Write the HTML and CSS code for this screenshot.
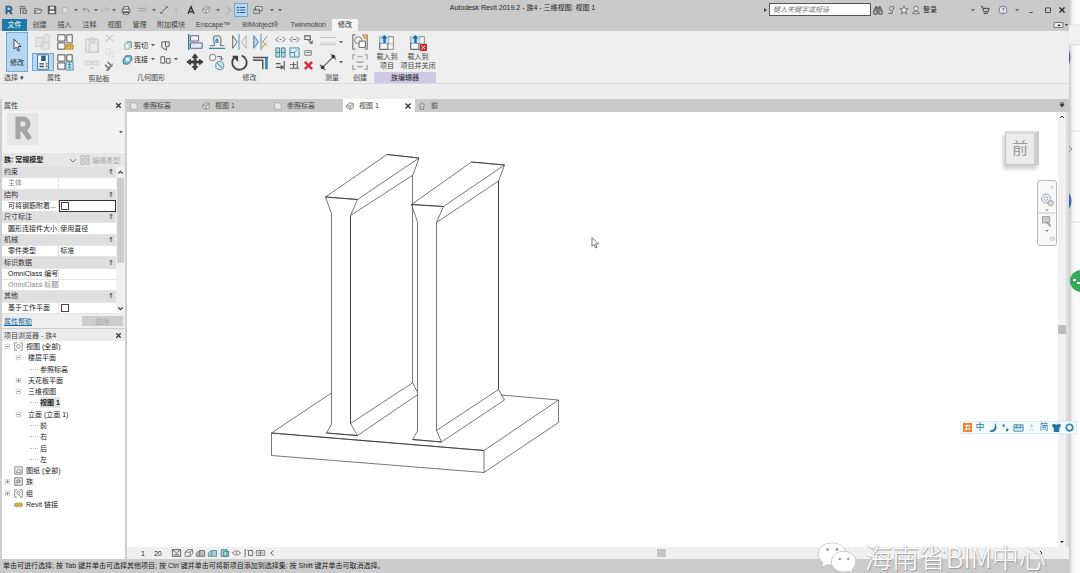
FILE: index.html
```html
<!DOCTYPE html>
<html lang="zh-CN">
<head>
<meta charset="utf-8">
<title>Autodesk Revit 2019.2 - 族4 - 三维视图: 视图 1</title>
<link rel="stylesheet" href="styles.css">
</head>
<body>
<svg class="defs" aria-hidden="true">
  <symbol id="caret" viewBox="0 0 8 8"><path d="M2 3h4L4 5.500z" fill="#666"/></symbol>
  <symbol id="close" viewBox="0 0 8 8"><path d="M2 2l4 4M6 2L2 6" stroke="#333" stroke-width="1.100"/></symbol>
  <symbol id="house" viewBox="0 0 12 12"><path d="M2 5l4-3 4 1v5l-4 2-4-2zM2 5l4 1 4-3M6 6v4" fill="#ddd" stroke="#777" stroke-width=".8"/></symbol>
  <symbol id="sheet" viewBox="0 0 12 12"><path d="M2 2h5l3 3v5H2z" fill="#e8e8e8" stroke="#aaa"/></symbol>
  <symbol id="minus" viewBox="0 0 8 8"><path d="M1.500 1.500h5v5h-5z" fill="#fff" stroke="#bbb" stroke-width=".8"/><path d="M2.500 4h3" stroke="#777"/></symbol>
  <symbol id="plus" viewBox="0 0 8 8"><path d="M1.500 1.500h5v5h-5z" fill="#fff" stroke="#bbb" stroke-width=".8"/><path d="M2.500 4h3M4 2.500v3" stroke="#777"/></symbol>
  <symbol id="load" viewBox="0 0 20 20"><path d="M2 3h15v14H2z" fill="#fff" stroke="#777"/><path d="M12 3v8h5" fill="none" stroke="#999"/><path d="M2 10h9v7H2z" fill="#f4f7fa" stroke="#456"/><path d="M3 1h8v9H3z" fill="#c5e3f5"/><path d="M7 1L3.500 5H6v5h2.500V5h2z" fill="#126aa8"/></symbol>
</svg>

<div class="app">
  <div class="window">
    <header class="titlebar">
      <nav class="qat" aria-label="快速访问工具栏">
        <button class="w14" aria-label="Revit"><svg viewBox="0 0 12 12"><path d="M3 11V2h3.500a2.300 2.300 0 0 1 0 5H3M6 7l3.500 4" fill="none" stroke="#246090" stroke-width="2.200"/></svg></button>
        <button class="w14" aria-label="主页"><svg viewBox="0 0 12 12"><path d="M2 4h8M2 2h7M3 4v7M6 6h4v4H6z" fill="none" stroke="#555"/></svg></button>
        <button class="w16" aria-label="打开"><svg viewBox="0 0 12 12"><path d="M2 10V4h3l1 1h3v1M2 10l2-4h7l-2 4z" fill="#ddd" stroke="#555" stroke-width=".9"/></svg></button>
        <button class="w12" aria-label="保存"><svg viewBox="0 0 12 12"><path d="M1.500 1.500h9v9h-9z" fill="#555" stroke="#444"/><path d="M3.500 2h5v3h-5zM3 7h6v3H3z" fill="#eee"/></svg></button>
        <button class="w14" aria-label="同步"><svg viewBox="0 0 12 12"><path d="M3 3h5l2 3-3 4H3z" fill="#ddd" stroke="#aaa"/></svg></button>
        <button class="w8" aria-label="同步选项"><svg><use href="#caret"/></svg></button>
        <button class="w12" aria-label="放弃"><svg viewBox="0 0 12 12"><path d="M5 3L2 5l3 3M2 5h6q3 1 1 4" fill="none" stroke="#888"/></svg></button>
        <button class="w8" aria-label="放弃列表"><svg><use href="#caret"/></svg></button>
        <button class="w10" aria-label="重做"><svg viewBox="0 0 12 12"><path d="M7 3l3 2-3 3M10 5H4q-3 1-1 4" fill="none" stroke="#b0b0b0"/></svg></button>
        <button class="w8" aria-label="重做列表"><svg><use href="#caret"/></svg></button>
        <button class="w16" aria-label="打印"><svg viewBox="0 0 12 12"><path d="M3 5V2h6v3M1.500 5h9v4h-9zM3 8h6v3H3z" fill="#eee" stroke="#444"/></svg></button>
        <button class="w16" aria-label="测量"><svg viewBox="0 0 12 12"><path d="M1 4h10M1 7h10" stroke="#999"/><path d="M1 9h10" stroke="#ccc"/></svg></button>
        <button class="w8" aria-label="测量选项"><svg><use href="#caret"/></svg></button>
        <button class="w12" aria-label="对齐尺寸标注"><svg viewBox="0 0 12 12"><path d="M2 10l8-8M1 8l3 3M8 1l3 3" stroke="#555"/></svg></button>
        <button class="w14" aria-label="标记"><svg viewBox="0 0 12 12"><path d="M5 4v1M5 8v1" stroke="#777"/></svg></button>
        <button class="w14" aria-label="文字"><svg viewBox="0 0 12 12"><path d="M2.500 10.500L6 2l3.500 8.500M4 8h4" fill="none" stroke="#333" stroke-width="1.700"/></svg></button>
        <button class="w16" aria-label="默认三维视图"><svg><use href="#house"/></svg></button>
        <button class="w8" aria-label="三维选项"><svg><use href="#caret"/></svg></button>
        <button class="w12" aria-label="剖面"><svg viewBox="0 0 12 12"><path d="M4 2l5 4-5 5" fill="none" stroke="#999"/></svg></button>
        <button class="w14 lit" aria-label="细线"><svg viewBox="0 0 12 12"><path d="M1 3h3M5 3h6M1 6h3M5 6h6M1 9h3M5 9h6" stroke="#235a90" stroke-width="1.300"/></svg></button>
        <button class="w20" aria-label="切换窗口"><svg viewBox="0 0 12 12"><path d="M3 2h8v5H3zM1 5h7v5H1z" fill="#ececec" stroke="#555"/></svg></button>
        <button class="w8" aria-label="窗口列表"><svg><use href="#caret"/></svg></button>
        <button class="w8" aria-label="自定义"><svg><use href="#caret"/></svg></button>
      </nav>
      <h1>Autodesk Revit 2019.2 - 族4 - 三维视图: 视图 1</h1>
      <div class="info">
        <svg class="i8" viewBox="0 0 8 8"><path d="M3 2l3 2-3 2z" fill="#444"/></svg>
        <input class="search" type="text" aria-label="搜索" placeholder="键入关键字或短语">
        <button class="w14" aria-label="查找"><svg viewBox="0 0 12 12"><path d="M3 2h2v3h2V2h2l2 5v4H7V8H5v3H1V7z" fill="#888" stroke="#333" stroke-width=".8"/><path d="M2 8h2v2H2zM8 8h2v2H8z" fill="#ddd"/></svg></button>
        <button class="w12" aria-label="通讯中心"><svg viewBox="0 0 12 12"><path d="M9 2q-5-1-5 2t4 3q-1 4-5 3M9 2v4M3 10h5" fill="none" stroke="#666"/></svg></button>
        <button class="w14" aria-label="收藏夹"><svg viewBox="0 0 12 12"><path d="M6 1l1.500 3.500 3.500.2-2.800 2.300 1 3.700L6 8.600l-3.200 2.100 1-3.700L1 4.700l3.500-.2z" fill="#e4e4e4" stroke="#555" stroke-width=".9"/></svg></button>
        <button class="signin"><svg viewBox="0 0 12 12"><circle cx="6" cy="4" r="2.600" fill="#eee" stroke="#666"/><path d="M2 10.500q0-3 4-3t4 3z" fill="#ddd" stroke="#666"/></svg>登录</button>
        <button class="w8" aria-label="帐户"><svg><use href="#caret"/></svg></button>
        <button class="w16" aria-label="应用商店"><svg viewBox="0 0 12 12"><path d="M1 2h2l1.500 6H10l1-4H4M4.500 10h5" fill="none" stroke="#444" stroke-width="1.200"/></svg></button>
        <button class="w20" aria-label="帮助"><svg viewBox="0 0 12 12"><circle cx="6" cy="6" r="4.700" fill="#eef" stroke="#667"/><path d="M4.500 4.500q1.500-2 3 0Q7.500 5.500 6 6.500v1M6 8.500v1" fill="none" stroke="#448"/></svg></button>
        <button class="w8" aria-label="帮助列表"><svg><use href="#caret"/></svg></button>
        <button class="w20" aria-label="最小化"><svg viewBox="0 0 12 12"><path d="M4 9h4" stroke="#333"/></svg></button>
        <button class="w14" aria-label="还原"><svg viewBox="0 0 12 12"><path d="M3 3.500h6v5.500H3z" fill="none" stroke="#333"/></svg></button>
        <button class="w14" aria-label="关闭"><svg viewBox="0 0 12 12"><path d="M3 3l6 6M9 3L3 9" stroke="#222" stroke-width="1.500"/></svg></button>
      </div>
    </header>

    <nav class="tabs" aria-label="功能区">
      <a class="file" href="#file">文件</a><a href="#create">创建</a><a href="#insert">插入</a><a href="#annotate">注释</a><a href="#view">视图</a><a href="#manage">管理</a><a href="#addins">附加模块</a><a href="#enscape">Enscape™</a><a href="#bimobject">BIMobject®</a><a href="#twinmotion">Twinmotion</a><a class="current" href="#modify">修改</a>
      <button class="collapse" aria-label="折叠功能区"><svg viewBox="0 0 16 8"><path d="M1 1.500h9v5H1z" fill="#eee" stroke="#777"/><path d="M4 5l2-2 2 2zM12 3h3l-1.500 2z" fill="#333"/></svg></button>
    </nav>

    <section class="ribbon" aria-label="修改">
      <div class="group">
        <div class="tools"><button class="select"><svg viewBox="0 0 12 16"><path d="M3 2v10l2.500-2 1.500 4 1.500-.6L7 9.500h3z" fill="#fff" stroke="#445"/></svg>修改</button></div>
        <div class="caption">选择 ▾</div>
      </div>
      <div class="group">
        <div class="tools pair">
          <button aria-label="粘贴类型属性"><svg viewBox="0 0 20 20"><path d="M2 5h8v10H2zM11 2h6v8h-6zM8 11h9v7H8z" fill="#e4e4e4" stroke="#ccc"/></svg></button>
          <button aria-label="族类别和族参数"><svg viewBox="0 0 20 20"><path d="M2 2h8v7H2zM12 2h6v9h-6zM2 11h8v7H2z" fill="#fafafa" stroke="#444"/><path d="M11 13h8v5h-8z" fill="#e8ba48" stroke="#b98b1c"/><path d="M13 14v2M16 14v2" stroke="#876"/></svg></button>
          <button class="lit" aria-label="属性"><svg viewBox="0 0 20 20"><path d="M4 2h12v16H4z" fill="#fff" stroke="#35618c"/><path d="M8 3h5v6H8z" fill="#235b93"/><path d="M6 12h5M6 15h5M13 12h2M13 15h2" stroke="#345" stroke-width="1.400"/></svg></button>
          <button aria-label="族类型"><svg viewBox="0 0 20 20"><path d="M2 2h8v7H2zM12 2h6v7h-6zM2 11h8v7H2z" fill="#fafafa" stroke="#444"/><path d="M11 10h8v9h-8zM13 13h4M13 16h4M15 11v7" fill="#cde7f2" stroke="#3e89aa"/></svg></button>
        </div>
        <div class="caption">属性</div>
      </div>
      <div class="group clip">
        <div class="tools">
          <div class="stack"><button class="big" aria-label="粘贴"><svg viewBox="0 0 20 20"><path d="M3 4h14v14H3zM7 2h6v4H7zM7 8h10v10H7z" fill="#e9e9e9" stroke="#c4c4c4"/></svg></button><button class="wide" aria-label="连接端切割"><svg viewBox="0 0 20 12"><path d="M3 3h6v4H3zM11 3h6v4h-6z" fill="#e8e8e8" stroke="#ccc"/><path d="M8 10h4l-2 2z" fill="#bbb"/></svg></button></div>
          <div class="stack small"><button aria-label="剪切"><svg viewBox="0 0 12 12"><path d="M2 2l8 7M10 2L2 9" stroke="#ccc" stroke-width="1.500"/></svg></button><button aria-label="复制"><svg viewBox="0 0 12 12"><path d="M2 2h5v6H2zM5 5h5v6H5z" fill="#eee" stroke="#ddd"/></svg></button><button aria-label="匹配类型"><svg viewBox="0 0 12 12"><path d="M1 4l5 5M4 1l5 5" stroke="#666" stroke-width="1.500"/><path d="M11 2L5 11H2l2-4z" fill="#886"/></svg></button></div>
        </div>
        <div class="caption">剪贴板</div>
      </div>
      <div class="group geo">
        <div class="tools rows">
          <div class="line"><button><svg viewBox="0 0 12 12"><path d="M3 4h5v6H3z" fill="#eee" stroke="#8a9"/><path d="M5 2h5v7" fill="#c9e5dc" stroke="#397d67"/></svg>剪切<svg class="i8"><use href="#caret"/></svg></button><button aria-label="拆分面"><svg viewBox="0 0 12 12"><path d="M2 2h8v5H7v4L2 8z" fill="#eee" stroke="#555"/><path d="M6 2v5" stroke="#555"/></svg></button></div>
          <div class="line"><button><svg viewBox="0 0 12 12"><path d="M4 2h6l1 4-4 5H2L1 7z" fill="#77b3d3" stroke="#2c7299"/><path d="M4 4h4v4H4z" fill="#e8f4fa"/></svg>连接<svg class="i8"><use href="#caret"/></svg></button><button aria-label="填色"><svg viewBox="0 0 12 12"><path d="M1 3h4v7H1zM7 5h4v5H7z" fill="#eee" stroke="#555"/></svg><svg class="i8"><use href="#caret"/></svg></button></div>
        </div>
        <div class="caption">几何图形</div>
      </div>
      <div class="group">
        <div class="tools modify">
          <div class="quad">
            <button aria-label="对齐"><svg viewBox="0 0 20 20"><path d="M3 1v18" stroke="#27739b" stroke-width="1.500"/><path d="M5 3h9v6H5z" fill="#eef" stroke="#557"/><path d="M5 11h13v6H5z" fill="#dcebf4" stroke="#557"/></svg></button>
            <button aria-label="偏移"><svg viewBox="0 0 20 20"><path d="M2 14h5v-3q-3-8 3-8t4 8v3h4" fill="none" stroke="#888" stroke-width="1.500"/><path d="M1 17h18M9 11v-3q0-3 2 0v3" fill="none" stroke="#4287aa" stroke-width="1.500"/></svg></button>
            <button aria-label="镜像 - 拾取轴"><svg viewBox="0 0 20 20"><path d="M3 3l5 7-5 7z" fill="#eee" stroke="#555"/><path d="M10 1v18" stroke="#398ab0"/><path d="M18 3l-5 7 5 7z" fill="#eee" stroke="#aaa"/></svg></button>
            <button aria-label="镜像 - 绘制轴"><svg viewBox="0 0 20 20"><path d="M2 3l5 7-5 7z" fill="#b9dced" stroke="#3c7592"/><path d="M10 1v18" stroke="#398ab0"/><path d="M17 3l-5 7 5 4" fill="#eee" stroke="#888"/><path d="M18 8l-5 8-2 1 1-3z" fill="#e5bd42"/></svg></button>
            <button aria-label="移动"><svg viewBox="0 0 20 20"><path d="M10 1l3 4h-2v4h4V7l4 3-4 3v-2h-4v4h2l-3 4-3-4h2v-4H5v2l-4-3 4-3v2h4V5H7z" fill="#444" stroke="#333"/></svg></button>
            <button aria-label="复制图元"><svg viewBox="0 0 20 20"><circle cx="5" cy="5" r="3.500" fill="#fff" stroke="#666"/><circle cx="13" cy="14" r="4.500" fill="#cfe6f1" stroke="#4389ab"/><path d="M10 11l6 6M10 4h5v3M13 6l2 2 2-2" fill="none" stroke="#557"/></svg></button>
            <button aria-label="旋转"><svg viewBox="0 0 20 20"><path d="M6 4a8 8 0 1 0 7-1" fill="none" stroke="#444" stroke-width="2"/><path d="M2 3h7v7z" fill="#444"/></svg></button>
            <button aria-label="修剪"><svg viewBox="0 0 20 20"><path d="M1 5h17M1 8h11v10" fill="none" stroke="#555" stroke-width="1.600"/><path d="M16 5v13" stroke="#3384ac" stroke-width="3"/></svg></button>
          </div>
          <div class="nine">
            <button aria-label="拆分图元"><svg viewBox="0 0 12 12"><path d="M4 3L1 6l3 3M8 3l3 3-3 3M5 6h2" fill="none" stroke="#666"/></svg></button>
            <button aria-label="用间隙拆分"><svg viewBox="0 0 12 12"><path d="M4 3L1 6l3 3M8 3l3 3-3 3M4 6h4" fill="none" stroke="#666"/></svg></button>
            <button aria-label="解锁"><svg viewBox="0 0 12 12"><path d="M2 2h6v4H2zM5 6l5 4M7 10h3V7" fill="none" stroke="#666" stroke-width="1.200"/></svg></button>
            <button aria-label="阵列"><svg viewBox="0 0 12 12"><path d="M1 1h4v10H1zM7 1h4v10H7zM1 6h4M7 6h4" fill="#b9d9e5" stroke="#357f98"/></svg></button>
            <button aria-label="缩放"><svg viewBox="0 0 12 12"><path d="M1 1h10v10H1zM1 6h5v5M6 6l3-3" fill="#d6ebf2" stroke="#46879e"/></svg></button>
            <button aria-label="锁定"><svg viewBox="0 0 12 12"><path d="M2 4h7v5H2zM4 6h4" fill="none" stroke="#777"/></svg></button>
            <button aria-label="修剪单个图元"><svg viewBox="0 0 12 12"><path d="M1 4h5M1 8h7M6 6l3 2-3 2M10 1v10" fill="none" stroke="#555" stroke-width="1.200"/></svg></button>
            <button aria-label="修剪多个图元"><svg viewBox="0 0 12 12"><path d="M1 5h7M1 9h10M5 2v7M9 1v8" fill="none" stroke="#555"/></svg></button>
            <button aria-label="删除"><svg viewBox="0 0 12 12"><path d="M2 2l8 8M10 2l-8 8" stroke="#d12b32" stroke-width="2.600"/></svg></button>
          </div>
        </div>
        <div class="caption">修改</div>
      </div>
      <div class="group measure">
        <div class="tools rows">
          <button><svg viewBox="0 0 20 20"><path d="M1 5h18M1 13h18" stroke="#bbb"/><path d="M1 10h18v2H1z" fill="#ddd"/></svg><svg class="i8"><use href="#caret"/></svg></button>
          <button><svg viewBox="0 0 20 20"><path d="M4 16L16 4M1 13l6 6M13 1l6 6" stroke="#555" stroke-width="1.200"/><circle cx="4" cy="16" r="2" fill="#333"/><circle cx="16" cy="4" r="2" fill="#333"/></svg><svg class="i8"><use href="#caret"/></svg></button>
        </div>
        <div class="caption">测量</div>
      </div>
      <div class="group create">
        <div class="tools rows">
          <button aria-label="创建组"><svg viewBox="0 0 20 20"><path d="M5 2H2v16h3M15 2h3v16h-3" fill="none" stroke="#555"/><circle cx="8" cy="8" r="4" fill="#eee" stroke="#777"/><path d="M9 9h7v7H9z" fill="#fff" stroke="#555"/><path d="M12 1h6v5l-4 1z" fill="#e8a565"/></svg></button>
          <button aria-label="创建类似实例"><svg viewBox="0 0 20 20"><path d="M5 2H2v5M15 2h3v5M5 18H2v-5M15 18h3v-5M7 4h6M7 15h6M6 10h8" fill="none" stroke="#aaa" stroke-width="1.500"/></svg></button>
        </div>
        <div class="caption">创建</div>
      </div>
      <div class="group editor">
        <div class="tools">
          <button class="load"><svg><use href="#load"/></svg>载入到<br>项目</button>
          <button class="load"><svg viewBox="0 0 20 20"><use href="#load" width="20" height="20"/><path d="M12 11h8v8h-8z" fill="#c92d36"/><path d="M14 13l4 4M18 13l-4 4" stroke="#fff"/></svg>载入到<br>项目并关闭</button>
        </div>
        <div class="caption">族编辑器</div>
      </div>
    </section>
    <div class="options"></div>

    <main class="work">
      <aside class="side">
        <section class="properties">
          <header class="panelhead"><h2>属性</h2><button aria-label="关闭属性"><svg><use href="#close"/></svg></button></header>
          <div class="family"><svg class="biglogo" viewBox="0 0 36 36"><path d="M2 2h32v32H2z" fill="#e6e6e6"/><path d="M13 28V8h5a5 5 0 0 1 0 10h-5M18 18l7 10" fill="none" stroke="#a4a4a4" stroke-width="5"/></svg><svg class="i8"><use href="#caret"/></svg></div>
          <div class="typerow"><select aria-label="类型"><option>族: 常规模型</option></select><svg class="i8" viewBox="0 0 8 8"><path d="M1 3l3 3 3-3" fill="none" stroke="#777"/></svg><button disabled><svg viewBox="0 0 12 12"><path d="M1 1h4v4H1zM7 1h4v4H7zM1 7h4v4H1zM7 7h4v4H7z" fill="none" stroke="#aaa"/></svg>编辑类型</button></div>
          <div class="gridwrap">
            <table class="props">
              <tr class="cat"><th colspan="2">约束<span>⇑</span></th></tr>
              <tr class="dim"><td>主体</td><td></td></tr>
              <tr class="cat"><th colspan="2">结构<span>⇑</span></th></tr>
              <tr><td><label for="rebar">可将钢筋附着...</label></td><td class="focus"><input id="rebar" type="checkbox"></td></tr>
              <tr class="cat"><th colspan="2">尺寸标注<span>⇑</span></th></tr>
              <tr><td>圆形连接件大小</td><td>使用直径</td></tr>
              <tr class="cat"><th colspan="2">机械<span>⇑</span></th></tr>
              <tr><td>零件类型</td><td>标准</td></tr>
              <tr class="cat"><th colspan="2">标识数据<span>⇑</span></th></tr>
              <tr><td>OmniClass 编号</td><td></td></tr>
              <tr class="dim"><td>OmniClass 标题</td><td></td></tr>
              <tr class="cat"><th colspan="2">其他<span>⇑</span></th></tr>
              <tr><td><label for="plane">基于工作平面</label></td><td><input id="plane" type="checkbox"></td></tr>
            </table>
            <div class="vscroll"><svg viewBox="0 0 8 8"><path d="M2 5l2-2 2 2" fill="none" stroke="#444" stroke-width="1.200"/></svg><i></i><svg viewBox="0 0 8 8"><path d="M2 3l2 2 2-2" fill="none" stroke="#444" stroke-width="1.200"/></svg></div>
          </div>
          <footer class="apply"><a href="#help">属性帮助</a><button disabled>应用</button></footer>
        </section>
        <section class="browser">
          <header class="panelhead"><h2>项目浏览器 - 族4</h2><button aria-label="关闭项目浏览器"><svg><use href="#close"/></svg></button></header>
          <ul class="tree">
            <li class="l0"><svg><use href="#minus"/></svg><svg class="ic" viewBox="0 0 12 12"><path d="M4 1H1v10h3M8 1h3v10H8" fill="none" stroke="#777"/><circle cx="6" cy="6" r="2.500" fill="none" stroke="#777"/></svg>视图 (全部)</li>
            <li class="l1"><svg><use href="#minus"/></svg>楼层平面</li>
            <li class="l2">参照标高</li>
            <li class="l1"><svg><use href="#plus"/></svg>天花板平面</li>
            <li class="l1"><svg><use href="#minus"/></svg>三维视图</li>
            <li class="l2 active"><b>视图 1</b></li>
            <li class="l1"><svg><use href="#minus"/></svg>立面 (立面 1)</li>
            <li class="l2">前</li>
            <li class="l2">右</li>
            <li class="l2">后</li>
            <li class="l2">左</li>
            <li class="l0 leaf"><svg class="ic" viewBox="0 0 12 12"><path d="M1 1h10v10H1zM3 8l3-4 3 2v3H3z" fill="#eee" stroke="#777"/></svg>图纸 (全部)</li>
            <li class="l0"><svg><use href="#plus"/></svg><svg class="ic" viewBox="0 0 12 12"><path d="M1 1h10v10H1zM4 9V4h4v3H4" fill="#eee" stroke="#555"/></svg>族</li>
            <li class="l0"><svg><use href="#plus"/></svg><svg class="ic" viewBox="0 0 12 12"><path d="M4 1H1v10h3M8 1h3v10H8M5 7l4 3" fill="none" stroke="#666"/><circle cx="6" cy="5" r="2" fill="none" stroke="#666"/></svg>组</li>
            <li class="l0 leaf"><svg class="ic" viewBox="0 0 12 12"><path d="M1 5q2-2 5 0 3-2 5 0v3q-2 2-5 0-3 2-5 0z" fill="#d9b64c" stroke="#9b8642"/></svg>Revit 链接</li>
          </ul>
        </section>
      </aside>

      <section class="docs">
        <nav class="doctabs" aria-label="视图">
          <a href="#v1"><svg><use href="#sheet"/></svg>参照标高</a><a href="#v2"><svg><use href="#house"/></svg>视图 1</a><a href="#v3"><svg><use href="#sheet"/></svg>参照标高</a><a class="current" href="#v4"><svg><use href="#house"/></svg>视图 1<svg class="x"><use href="#close"/></svg></a><a class="last" href="#v5"><svg viewBox="0 0 12 12"><path d="M2 6l4-4 4 4M4 6v4h4V6" fill="none" stroke="#777"/></svg>前</a>
          <svg class="i8 more" viewBox="0 0 8 8"><path d="M2 2h4M2 3.500h4L4 6z" stroke="#444" fill="#444"/></svg>
        </nav>
        <div class="viewport">
          <div class="canvas">
            <svg class="model" viewBox="127 112 931 435" preserveAspectRatio="xMinYMin slice" role="img" aria-label="三维模型">
              <g fill="none" stroke="#555" stroke-width=".8" stroke-linejoin="round">
                <path d="M331.500 393L271.500 433v22.500L484 472.500l74.500-50V400L501 395"/>
                <path d="M271.500 433L484 450.500 558.500 400M484 450.500v22"/>
                <path d="M325.500 197l61.500-42.500 32 3.500-61.500 41.500zM419 158l-6 17-62.500 40.500M357.500 199.500l-7 16"/>
                <path d="M325.500 197l6 16.500V424l-5 9 31 2.500-7-12V215.500M350.500 423.500L413 382.500M357.500 435.500L417 395M412.500 175v207.500l4.500 9"/>
                <path d="M411.500 204.500l60-42.500 33 3-61 41.500zM504.500 165l-6 16-62 41.500M443.500 206.500l-7 16"/>
                <path d="M411.500 204.500l6 17.500v209l-5 8.500 29 2.500-5-11.500v-208M498.500 181v208.500l-62 41M498.500 389.500l6 10.500-63 42"/>
              </g>
              <g fill="none" stroke="#333" stroke-width=".8"><path d="M387 154.500l32 3.500M325.500 197l32 2.500M411.500 204.500l32 2M471.500 162l33 3M271.500 433L484 450.500M326.500 433l31 2.500M412.500 439.500l29 2.500M350.500 215.500v208M498.500 181v208.500"/></g>
              <path d="M592 237.500v9l2-2 1.500 3.500 1.500-.7-1.500-3.300h3z" fill="#fff" stroke="#777"/>
            </svg>
            <div class="cube">前</div>
            <div class="navbar">
              <svg viewBox="0 0 20 66"><path d="M14 3l3 3M17 3l-3 3M1 33h18M14 60h4v3h-4z" fill="none" stroke="#bbb"/><circle cx="9" cy="17" r="5" fill="#e8f1f6" stroke="#8ba8b8"/><circle cx="9" cy="17" r="2" fill="#fff" stroke="#8ba8b8"/><circle cx="14" cy="22" r="3" fill="#ddd" stroke="#999"/><path d="M8 29h4l-2 2zM8 52h4l-2 2z" fill="#888"/><path d="M5 37h8v7H5z" fill="#ccc" stroke="#999"/><path d="M10 43l4 5" stroke="#999" stroke-width="2"/></svg>
            </div>
          </div>
          <div class="viewscroll"><svg viewBox="0 0 8 8"><path d="M2 5l2-2 2 2" fill="none" stroke="#333"/></svg><i></i><svg viewBox="0 0 8 8"><path d="M2 3h4L4 5z" fill="#333"/></svg></div>
        </div>
        <footer class="viewbar">
          <span>1</span><span>20</span>
          <div class="vcicons">
            <svg viewBox="0 0 12 12"><path d="M1 2h10v8H1zM1 2l5 4 5-4M3 8h6" fill="#eee" stroke="#444"/></svg>
            <svg viewBox="0 0 12 12"><path d="M2 5l3-3h6v5L8 10H2zM2 5h6v5M8 5l3-3" fill="#eee" stroke="#666"/></svg>
            <svg viewBox="0 0 12 12"><path d="M1 10V6l4-3h6v7zM5 3v7" fill="#bbb" stroke="#666"/></svg>
            <svg viewBox="0 0 12 12"><path d="M1 10V6l4-3h6v7zM5 3v7" fill="#a6cfd5" stroke="#5b8389"/></svg>
            <svg viewBox="0 0 12 12"><path d="M2 2h7v8H2zM5 4h6v6H5z" fill="#acd8d9" stroke="#3c7d83"/></svg>
            <svg viewBox="0 0 12 12"><path d="M1 6q5-5 10 0-5 5-10 0zM6 5v2" fill="#eee" stroke="#666"/></svg>
            <svg viewBox="0 0 12 12"><path d="M2 1v10M6 3h5v6H6zM4 3h1" fill="none" stroke="#555"/></svg>
            <svg viewBox="0 0 12 12"><path d="M1 3h10v6H1zM3 6h6M6 3v6" fill="#ddd" stroke="#777"/></svg>
            <svg viewBox="0 0 12 12"><path d="M7 3L4 6l3 3" fill="none" stroke="#333"/></svg>
          </div>
          <div class="hscroll"><i></i><svg class="i8" viewBox="0 0 8 8"><path d="M3 2l2 2-2 2" fill="none" stroke="#333"/></svg></div>
        </footer>
      </section>
    </main>
    <footer class="status">单击可进行选择; 按 Tab 键并单击可选择其他项目; 按 Ctrl 键并单击可将新项目添加到选择集; 按 Shift 键并单击可取消选择。</footer>
  </div>

  <div class="backdrop">
    <svg viewBox="0 0 12 300"><path d="M0 25h12v20H0z" fill="#f0f0f0"/><path d="M0 25h12M0 45h12M0 131h12M0 222h12" stroke="#ddd"/><path d="M0 50q3 7 0 15z" fill="#3867b1"/><path d="M0 193q5 8 0 16z" fill="#3867b1"/><path d="M0 146l3 3-3 3" fill="none" stroke="#888"/><circle cx="12" cy="281" r="11" fill="#36a95a"/><path d="M4 280h3M8 283h3" stroke="#fff" stroke-width="2"/></svg>
  </div>
</div>

<div class="ime" aria-label="输入法">
  <svg viewBox="0 0 12 12"><path d="M1 1h10v10H1z" fill="#ec8139"/><path d="M3 4h6M3 8h6M6 3L4 9M8 5v3" stroke="#fff" fill="none"/></svg>
  <b>中</b>
  <svg viewBox="0 0 12 12"><path d="M9 2q1 7-6 8 6 2 7-4z" fill="#36749c" stroke="#36749c"/></svg>
  <svg viewBox="0 0 12 12"><circle cx="4" cy="4" r="1.500" fill="#4c91ad"/><path d="M8 7v2l-1 1" stroke="#36749c" stroke-width="2"/></svg>
  <svg viewBox="0 0 12 12"><path d="M1 3h10v7H1zM1 6h10M4 3v4M8 3v4" fill="#d1e9f0" stroke="#4c8ca8"/></svg>
  <svg viewBox="0 0 12 12"><circle cx="6" cy="4" r="1.500" fill="#ccc"/><path d="M3 10q3-4 6 0" fill="none" stroke="#ccc"/></svg>
  <b>简</b>
  <svg viewBox="0 0 12 12"><path d="M1 3l3-1q2 2 4 0l3 1-1 3H9v5H3V6H2z" fill="#2676a2"/></svg>
  <svg viewBox="0 0 12 12"><circle cx="6" cy="6" r="3.500" fill="#fff" stroke="#3288b6" stroke-width="2"/></svg>
</div>
<div class="watermark">
  <svg viewBox="0 0 44 34"><g fill="#fff" stroke="#bbb" stroke-width=".8"><path d="M17 2C8 2 2 7 2 14q0 5 5 9l-1 5 6-3q4 1 8 0 9-3 12-11C31 6 24 2 17 2z"/><path d="M29 11c-8 0-13 5-13 11s6 11 13 11q3 0 5-1l5 2-1-4q4-3 4-8c0-6-5-11-13-11z"/></g><g fill="#999"><circle cx="12" cy="9" r="1.500"/><circle cx="22" cy="9" r="1.500"/><circle cx="25" cy="19" r="1.300"/><circle cx="34" cy="19" r="1.300"/></g></svg>
  <span>海南省BIM中心</span>
</div>
</body>
</html>
```
FILE: styles.css
```css
* { box-sizing: border-box; }
body {
  margin: 0;
  font: 7px/11px "Liberation Sans", "Noto Sans CJK SC", sans-serif;
  color: #222;
  overflow: hidden;
}
h1, h2 { margin: 0; font-size: 7px; font-weight: 400; white-space: nowrap; }
button, input, select { font: inherit; color: inherit; }
button { padding: 0; border: 0; background: none; display: flex; align-items: center; justify-content: center; white-space: nowrap; }
a { color: inherit; text-decoration: none; white-space: nowrap; }
svg { display: block; flex: none; }
.defs { position: absolute; width: 0; height: 0; }
.i8 { width: 8px; height: 8px; }

.app { display: flex; height: 100vh; }
.window { flex: 1; min-width: 0; display: flex; flex-direction: column; background: #ececec; }
.backdrop { width: 11px; flex: none; background: linear-gradient(90deg, #c8c8c8, #f8f8f8 4px, #fff); }
.backdrop svg { width: 12px; height: 300px; }

/* title bar */
.titlebar { flex: none; height: 19px; display: flex; align-items: center; background: #cacaca; }
.qat { display: flex; align-items: center; padding-left: 2px; flex: 1; }
.titlebar button svg { width: 10px; height: 10px; }
.titlebar .w8 svg { width: 8px; height: 8px; }
.w8 { width: 8px; }
.w10 { width: 10px; }
.w12 { width: 12px; }
.w14 { width: 14px; }
.w16 { width: 16px; }
.w20 { width: 20px; }
.qat .lit { height: 14px; }
.lit { background: #b7d8f2; outline: 1px solid #6fa6d2; outline-offset: -1px; }
.titlebar h1 { line-height: 16px; align-self: flex-start; padding-right: 26px; }
.info { flex: 1; display: flex; align-items: center; justify-content: flex-end; }
.search { width: 102px; height: 13px; padding: 0 3px; border: 1px solid #555; background: #fff; border-radius: 0; }
.search::placeholder { color: #777; font-style: italic; opacity: 1; }
.signin { gap: 2px; margin-right: 32px; }

/* ribbon */
.tabs { flex: none; height: 12px; display: flex; background: #cacaca; padding-left: 2px; line-height: 12px; color: #444; }
.tabs a { padding: 0 5px; flex: none; min-width: 25px; text-align: center; }
.tabs .file { background: #1979a9; color: #fff; }
.tabs a:nth-child(n+8) { padding: 0 6px; }
.tabs .current { background: #f4f4f4; color: #222; }
.collapse { margin-left: auto; }
.collapse svg { width: 16px; height: 8px; }
.ribbon { flex: none; display: flex; background: #eee; height: 53px; padding-left: 2px; border-bottom: 1px solid #d9d9d9; }
.group { display: flex; flex-direction: column; padding: 1px 2px 0; }
.tools { flex: 1; display: flex; align-items: center; }
.caption { text-align: center; line-height: 11px; height: 11px; color: #444; white-space: nowrap; }
.select { width: 22px; height: 40px; margin-left: 2px; flex-direction: column; gap: 4px; background: #b3d8f2; border: 1px solid #7baacd; }
.group:first-child .caption { text-align: left; }
.pair { display: grid; grid-template-columns: 22px 22px; grid-template-rows: 20px 20px; align-content: center; }
.tools button svg { width: 18px; height: 18px; }
.tools .i8, .tools button .i8 { width: 8px; height: 8px; }
.tools .select svg { width: 12px; height: 16px; }
.clip { padding: 1px 5px 0; }
.clip .tools { gap: 3px; justify-content: center; }
.stack { display: flex; flex-direction: column; gap: 4px; }
.stack .wide svg { height: 12px; }
.stack.small { gap: 1px; }
.tools .small svg, .line button svg, .tools .nine svg { width: 11px; height: 11px; }
.small button { height: 13px; }
.rows { flex-direction: column; justify-content: center; gap: 2px; align-items: flex-start; }
.geo { width: 62px; }
.geo .rows { gap: 3px; }
.line { display: flex; gap: 3px; }
.line button { gap: 1px; }
.modify { gap: 1px; }
.quad { display: grid; grid-template-columns: repeat(4, 22px); grid-auto-rows: 20px; }
.nine { display: grid; grid-template-columns: repeat(3, 14px); grid-auto-rows: 13px; }
.create { padding: 1px 0 0 4px; }
.editor { padding: 1px 0 0; margin-left: 5px; }
.editor .caption { background: #cfc9e6; color: #222; }
.load { width: 26px; flex-direction: column; line-height: 9px; color: #444; }
.editor .load + .load { width: 36px; }
.options { flex: none; height: 15px; background: #ededed; }

/* panels */
.work { flex: 1; min-height: 0; display: flex; }
.side { width: 127px; flex: none; display: flex; flex-direction: column; border: solid #cfcfcf; border-width: 0 2px 0 2px; background: #eee; }
.panelhead { display: flex; justify-content: space-between; align-items: center; height: 12px; padding: 0 2px; background: #ececec; color: #444; }
.panelhead svg { width: 9px; height: 9px; }
.properties { display: flex; flex-direction: column; }
.family { height: 42px; display: flex; align-items: flex-start; justify-content: space-between; background: #f3f3f3; padding: 0 0 0 3px; }
.family .i8 { align-self: center; }
.biglogo { width: 36px; height: 36px; }
.typerow { height: 14px; display: flex; align-items: center; background: #e6e6e6; }
.typerow select { appearance: none; border: 0; background: none; width: 67px; padding: 0 2px; line-height: 12px; font-weight: 700; }
.typerow button { color: #aaa; gap: 2px; margin-left: 3px; }
.typerow button svg { width: 10px; height: 10px; }
.gridwrap { display: flex; height: 147px; background: #fff; }
.props { flex: 1; height: 100%; border-collapse: collapse; table-layout: fixed; line-height: 10px; }
.props td, .props th { padding: 0; text-align: left; font-weight: 400; white-space: nowrap; border-bottom: 1px solid #e4e4e4; }
.props td:first-child { padding-left: 6px; width: 56px; border-right: 1px dotted #ccc; }
.props td + td { padding-left: 1px; }
.props .cat th { background: #dfdfdf; padding: 0 2px; color: #333; }
.cat span { float: right; color: #333; }
.dim { color: #888; }
.props .focus { outline: 1px solid #333; outline-offset: -1px; }
.props input { appearance: none; display: block; width: 8px; height: 8px; margin: 0 0 0 1px; border: 1px solid #444; background: #fff; }
.vscroll { width: 9px; display: flex; flex-direction: column; align-items: center; background: #f0f0f0; }
.vscroll svg { width: 9px; height: 11px; }
.vscroll i { width: 7px; height: 85px; background: #cdcdcd; margin-bottom: auto; }
.apply { height: 14px; display: flex; align-items: center; justify-content: space-between; padding: 0 2px; }
.apply a { color: #1468a4; text-decoration: underline; }
.apply button { width: 41px; height: 10px; background: #ccc; color: #aaa; }
.browser { flex: 1; border-top: 1px solid #ccc; display: flex; flex-direction: column; background: #fff; }
.tree { list-style: none; margin: 0; padding: 0; height: 169px; display: grid; grid-auto-rows: 1fr; }
.tree li { display: flex; align-items: center; white-space: nowrap; }
.tree svg { width: 7px; height: 7px; margin-right: 3px; }
.tree .ic { width: 9px; height: 9px; }
.l0 { padding-left: 2px; }
.tree .leaf { padding-left: 12px; }
.l1 { padding-left: 13px; }
.l1 svg:first-child { margin-right: 6px; }
.l2 { padding-left: 28px; }
.l2::before { content: ""; width: 8px; border-top: 1px dotted #bbb; margin-right: 2px; }
.active b { background: #e3e3e3; }

/* document area */
.docs { flex: 1; min-width: 0; display: flex; flex-direction: column; }
.doctabs { display: flex; height: 13px; background: #cacaca; align-items: stretch; line-height: 12px; }
.doctabs a { width: 72px; display: flex; align-items: center; padding: 0 2px; gap: 4px; color: #444; }
.doctabs a svg { width: 10px; height: 10px; }
.doctabs .current { background: #fff; }
.doctabs .x { margin-left: auto; }
.doctabs .last { width: auto; }
.more { margin: 2px 3px 0 auto; }
.viewport { flex: 1; min-height: 0; display: flex; }
.canvas { flex: 1; position: relative; overflow: hidden; background: #fff; }
.model { width: 931px; height: 435px; }
.cube { position: absolute; right: 19px; top: 19px; width: 34px; height: 34px; background: #ebebeb; border: 1px solid #c4c4c4; border-top: 3px solid #dcdcdc; border-right: 5px solid #cdcdcd; box-shadow: -2px 4px 4px #ccc; color: #999; font-size: 16px; line-height: 30px; text-align: center; }
.navbar { position: absolute; right: 1px; top: 68px; border: 1px solid #bbb; border-radius: 3px; background: #f8f8f8; }
.navbar svg { width: 18px; height: 64px; }
.viewscroll { width: 11px; display: flex; flex-direction: column; justify-content: space-between; background: #f1f1f1; border-right: 3px solid #ddd; }
.viewscroll svg { width: 8px; height: 10px; }
.viewscroll i { height: 9px; background: #bebebe; }
.viewbar { height: 12px; display: flex; align-items: center; background: #f0f0f0; padding-left: 14px; gap: 9px; }
.vcicons { display: flex; gap: 1px; }
.vcicons svg { width: 11px; height: 10px; }
.hscroll { flex: 1; display: flex; align-items: center; justify-content: flex-end; padding-right: 24px; }
.hscroll i { width: 9px; height: 8px; background: #c4c4c4; margin: 0 auto; }
.status { flex: none; height: 14px; padding-left: 3px; line-height: 13px; background: #cbcbcb; white-space: nowrap; }

/* floating layers */
.ime { position: absolute; right: 3px; top: 421px; height: 13px; display: flex; align-items: center; gap: 2px; padding: 0 1px; background: #f2fbfd; border: 1px solid #dcebee; color: #2d7da2; }
.ime svg { width: 11px; height: 11px; }
.ime b { width: 10px; text-align: center; font-size: 9px; font-weight: 400; }
.watermark { position: absolute; right: 34px; bottom: 0; height: 32px; display: flex; align-items: center; gap: 7px; color: #fff; }
.watermark svg { width: 42px; height: 32px; }
.watermark span { font: 300 27px/32px "Noto Sans CJK SC", sans-serif; text-shadow: 1px 1px 1px #999, -1px 0 1px #ccc; white-space: nowrap; }
```
